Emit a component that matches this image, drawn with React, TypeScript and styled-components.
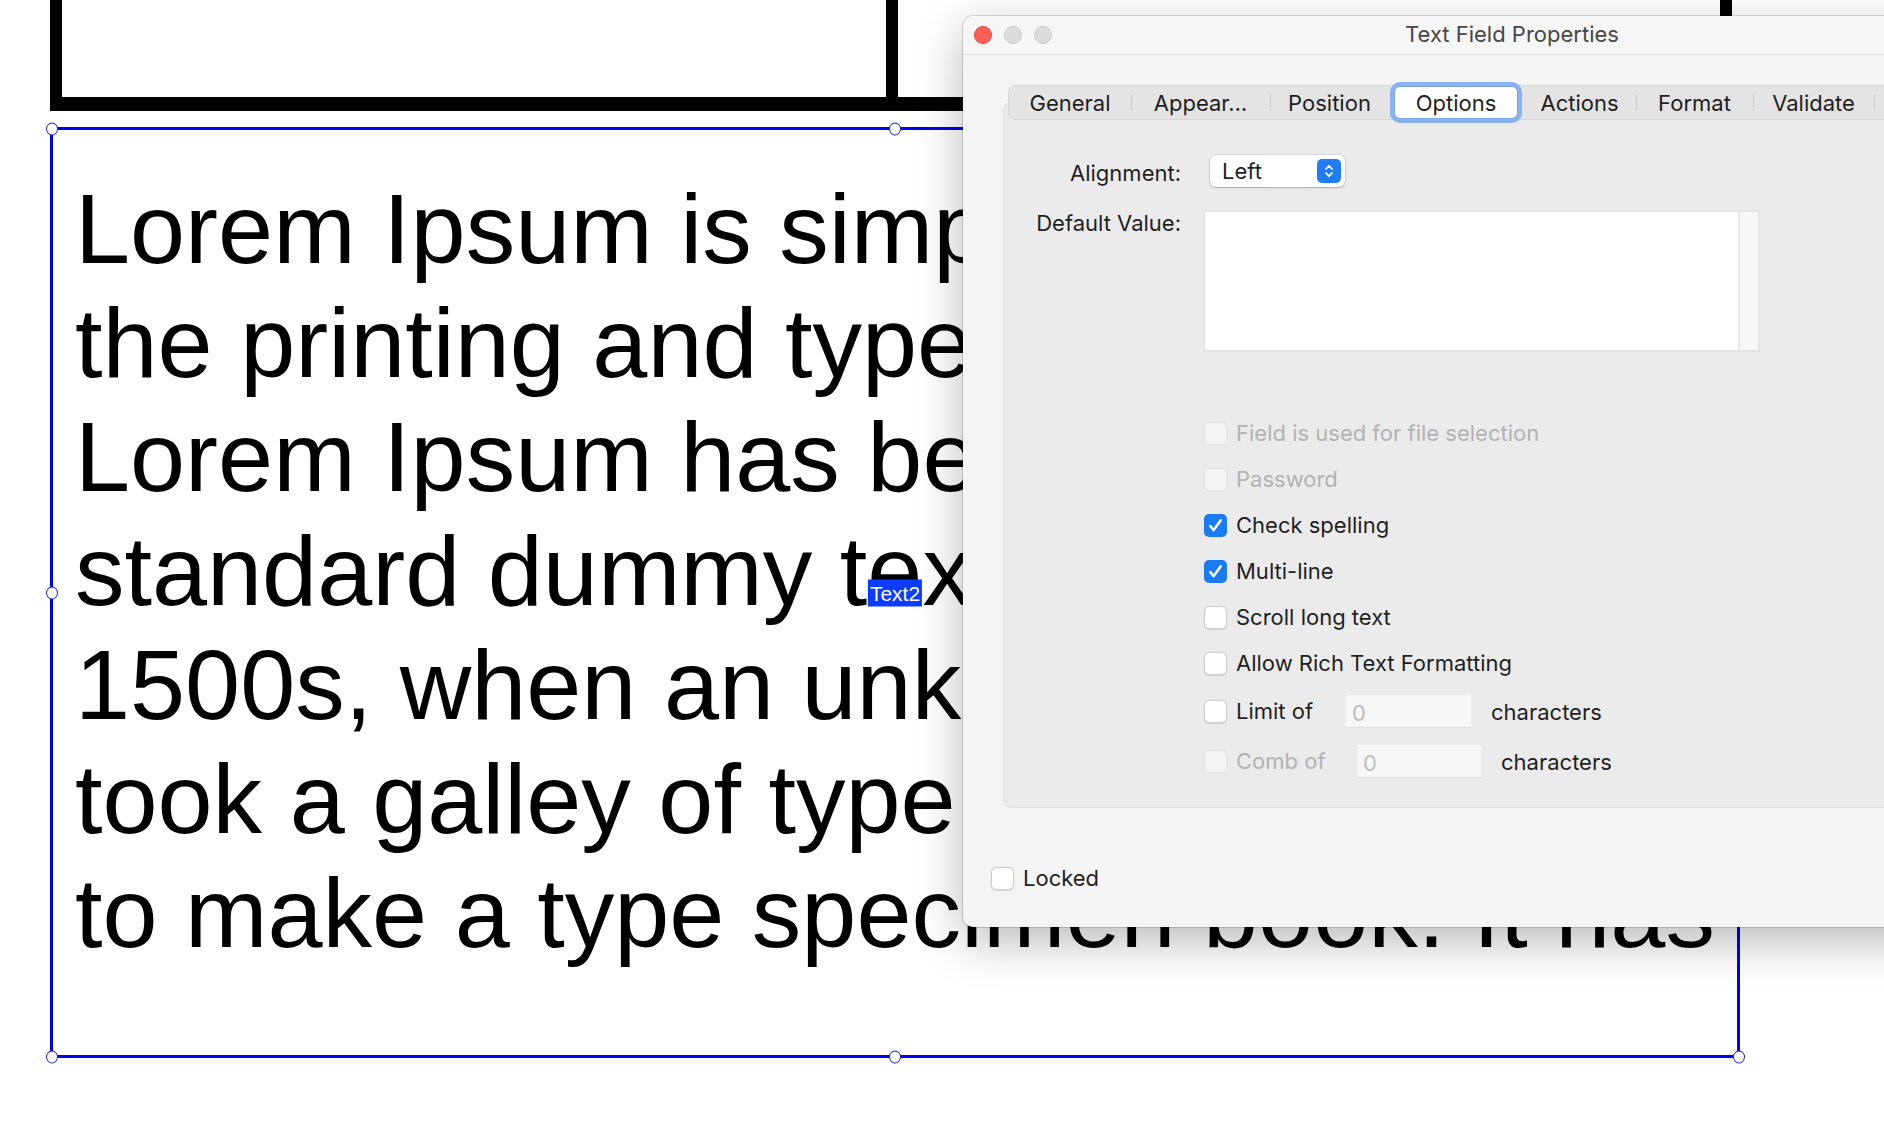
import styled, { createGlobalStyle } from 'styled-components';

const LOREM_LINES = [
	'Lorem Ipsum is simply dummy text of',
	'the printing and typesetting industry.',
	"Lorem Ipsum has been the industry's",
	'standard dummy text ever since the',
	'1500s, when an unknown printer',
	'took a galley of type and scrambled it',
	'to make a type specimen book. It has',
];

const TABS = [
	{ label: 'General', width: 122 },
	{ label: 'Appear…', width: 139 },
	{ label: 'Position', width: 119 },
	{ label: 'Options', width: 134 },
	{ label: 'Actions', width: 113 },
	{ label: 'Format', width: 117 },
	{ label: 'Validate', width: 121 },
	{ label: 'Calculate', width: 124 },
];
const ACTIVE_TAB = 3;

type Option = {
	label: string;
	checked?: boolean;
	disabled?: boolean;
	limit?: { labelWidth: number; inputWidth: number };
};

const OPTIONS: Option[] = [
	{ label: 'Field is used for file selection', disabled: true },
	{ label: 'Password', disabled: true },
	{ label: 'Check spelling', checked: true },
	{ label: 'Multi-line', checked: true },
	{ label: 'Scroll long text' },
	{ label: 'Allow Rich Text Formatting' },
	{ label: 'Limit of', limit: { labelWidth: 101, inputWidth: 125 } },
	{ label: 'Comb of', disabled: true, limit: { labelWidth: 112, inputWidth: 124 } },
];

const HANDLES: Array<[0 | 50 | 100, 0 | 50 | 100]> = [
	[0, 0],
	[50, 0],
	[100, 0],
	[0, 50],
	[100, 50],
	[0, 100],
	[50, 100],
	[100, 100],
];

function CheckMark() {
	return (
		<svg width="23" height="23" viewBox="0 0 24 24" fill="none">
			<path d="M6.5 12.5l3.6 4.3L17.5 6.5" stroke="#fff" strokeWidth="2.6" strokeLinecap="round" strokeLinejoin="round" />
		</svg>
	);
}

function Checkbox({ checked, disabled }: { checked?: boolean; disabled?: boolean }) {
	return (
		<Box $state={checked ? 'checked' : disabled ? 'disabled' : 'normal'}>
			{checked && <CheckMark />}
		</Box>
	);
}

export default function App() {
	return (
		<>
			<GlobalStyle />
			<Page>
				<FrameRow>
					<Frame $width={848} />
					<Frame $width={846} $overlap />
				</FrameRow>
				<FieldBox>
					{LOREM_LINES.map((line, index) => (
						<LoremLine key={index}>{line}</LoremLine>
					))}
					{HANDLES.map(([x, y], index) => (
						<Handle key={index} $x={x} $y={y} />
					))}
					<FieldTag>Text2</FieldTag>
				</FieldBox>

				<Dialog>
					<TitleBar>
						<Lights>
							<Light $color="red" />
							<Light />
							<Light />
						</Lights>
						<Title>Text Field Properties</Title>
					</TitleBar>
					<DialogBody>
						<TabPanel>
							<TabBar>
								{TABS.map((tab, index) => (
									<Tab
										key={tab.label}
										$width={tab.width}
										$separator={index > 0 && index !== ACTIVE_TAB && index !== ACTIVE_TAB + 1}
									>
										<TabLabel $active={index === ACTIVE_TAB}>{tab.label}</TabLabel>
									</Tab>
								))}
							</TabBar>
							<PanelBox>
								<FormGrid>
									<FieldLabel>Alignment:</FieldLabel>
									<Select>
										<span>Left</span>
										<Stepper>
											<svg width="12" height="18" viewBox="0 0 12 18" fill="none">
												<path d="M3 7l3-3.2L9 7M3 11l3 3.2L9 11" stroke="#fff" strokeWidth="1.8" strokeLinecap="round" strokeLinejoin="round" />
											</svg>
										</Stepper>
									</Select>
									<FieldLabel $top>Default Value:</FieldLabel>
									<TextArea>
										<TextAreaFill />
										<TextAreaTrack />
									</TextArea>
									<OptionList>
										{OPTIONS.map((option) => (
											<OptionRow key={option.label} $tall={!!option.limit}>
												<Checkbox checked={option.checked} disabled={option.disabled} />
												<OptionText $disabled={option.disabled} $width={option.limit?.labelWidth}>
													{option.label}
												</OptionText>
												{option.limit && (
													<>
														<NumberInput $width={option.limit.inputWidth}>0</NumberInput>
														<Suffix>characters</Suffix>
													</>
												)}
											</OptionRow>
										))}
									</OptionList>
								</FormGrid>
							</PanelBox>
						</TabPanel>
						<LockedRow>
							<Checkbox />
							<OptionText>Locked</OptionText>
						</LockedRow>
					</DialogBody>
				</Dialog>
			</Page>
		</>
	);
}

const GlobalStyle = createGlobalStyle`
	html, body {
		margin: 0;
		padding: 0;
		width: 1884px;
		height: 1128px;
		overflow: hidden;
		background: #fff;
	}

	body {
		font-family: 'Liberation Sans', Arial, sans-serif;
	}
`;

const Page = styled.div`
	position: relative;
	width: 1884px;
	height: 1128px;
	padding-left: 50px;
	box-sizing: border-box;
	overflow: hidden;
`;

const FrameRow = styled.div`
	display: flex;
`;

const Frame = styled.div<{ $width: number; $overlap?: boolean }>`
	width: ${(p) => p.$width}px;
	height: 111px;
	box-sizing: border-box;
	border: 12px solid #000;
	border-top: none;
	border-bottom-width: 14px;
	margin-left: ${(p) => (p.$overlap ? '-12px' : '0')};
`;

const FieldBox = styled.div`
	position: relative;
	margin-top: 16px;
	width: 1690px;
	height: 931px;
	box-sizing: border-box;
	border: 3px solid #0000f2;
	padding: 42px 0 0 22px;
`;

const LoremLine = styled.div`
	font-family: 'Liberation Sans', Arial, sans-serif;
	font-size: 99px;
	line-height: 114px;
	color: #000;
	white-space: nowrap;
`;

const edge = (p: 0 | 50 | 100) => (p === 0 ? '-1.5px' : p === 100 ? 'calc(100% + 1.5px)' : '50%');

const Handle = styled.span<{ $x: 0 | 50 | 100; $y: 0 | 50 | 100 }>`
	position: absolute;
	left: ${(p) => edge(p.$x)};
	top: ${(p) => edge(p.$y)};
	width: 10px;
	height: 11px;
	border-radius: 50%;
	background: #fff;
	border: 1.5px solid #2020e8;
	transform: translate(-50%, -50%);
`;

const FieldTag = styled.span`
	position: absolute;
	left: 50%;
	top: 50%;
	transform: translate(-50%, -50%);
	padding: 0 2px;
	background: #0b3cff;
	color: #fff;
	font-family: 'Liberation Sans', Arial, sans-serif;
	font-size: 21px;
	line-height: 27px;
`;

const Dialog = styled.div`
	position: absolute;
	left: 963px;
	top: 16px;
	width: 1098px;
	height: 911px;
	display: flex;
	flex-direction: column;
	background: #f4f4f4;
	border-radius: 10px;
	overflow: hidden;
	box-shadow: 0 0 0 1px rgba(0, 0, 0, 0.14), 0 14px 48px rgba(0, 0, 0, 0.28);
	font-family: Inter, 'Liberation Sans', sans-serif;
	color: #1f1f1f;
`;

const TitleBar = styled.div`
	height: 38px;
	flex-shrink: 0;
	display: grid;
	grid-template-columns: 1fr auto 1fr;
	align-items: center;
	padding-left: 11px;
	background: #f6f6f6;
	border-bottom: 1px solid #d8d8d8;
`;

const Lights = styled.div`
	display: flex;
	gap: 12px;
`;

const Light = styled.span<{ $color?: 'red' }>`
	width: 18px;
	height: 18px;
	box-sizing: border-box;
	border-radius: 50%;
	background: ${(p) => (p.$color === 'red' ? '#fe5f57' : '#dcdcdc')};
	border: 1px solid ${(p) => (p.$color === 'red' ? '#e2463f' : '#cbcbcb')};
`;

const Title = styled.div`
	font-size: 22px;
	line-height: 26px;
	padding-bottom: 2px;
	color: #474747;
	padding-right: 11px;
`;

const DialogBody = styled.div`
	flex: 1;
	padding: 30px 0 0 28px;
`;

const TabPanel = styled.div`
	margin-left: 12px;
`;

const TabBar = styled.div`
	position: relative;
	z-index: 1;
	display: flex;
	width: fit-content;
	height: 35px;
	margin-left: 5px;
	box-sizing: border-box;
	background: #e4e4e4;
	border: 1px solid #d6d6d6;
	border-radius: 7px;
`;

const Tab = styled.div<{ $width: number; $separator: boolean }>`
	position: relative;
	width: ${(p) => p.$width}px;
	display: flex;
	align-items: center;
	justify-content: center;

	&::before {
		content: '';
		display: ${(p) => (p.$separator ? 'block' : 'none')};
		position: absolute;
		left: 0;
		top: 8px;
		bottom: 8px;
		width: 1px;
		background: #cbcbcb;
	}
`;

const TabLabel = styled.span<{ $active: boolean }>`
	font-size: 22px;
	line-height: 26px;
	color: #1f1f1f;
	${(p) =>
		p.$active &&
		`
		width: calc(100% - 12px);
		height: 31px;
		display: flex;
		align-items: center;
		justify-content: center;
		background: #fff;
		border-radius: 5px;
		box-shadow: 0 0 0 1px rgba(0, 0, 0, 0.08), 0 0 0 5px #89b2f0;
	`}
`;

const PanelBox = styled.div`
	margin-top: -18px;
	height: 706px;
	box-sizing: border-box;
	padding: 52px 0 0 19px;
	background: #ebebeb;
	border: 1px solid #dfdfdf;
	border-radius: 8px;
`;

const FormGrid = styled.div`
	display: grid;
	grid-template-columns: 158px 1fr;
	column-gap: 22px;
	row-gap: 23px;
	align-items: center;
`;

const FieldLabel = styled.div<{ $top?: boolean }>`
	text-align: right;
	font-size: 22px;
	line-height: 26px;
	align-self: ${(p) => (p.$top ? 'start' : 'center')};
	padding-top: ${(p) => (p.$top ? '0' : '4px')};
`;

const Select = styled.div`
	width: 135px;
	height: 32px;
	margin-left: 7px;
	box-sizing: border-box;
	display: flex;
	align-items: center;
	justify-content: space-between;
	padding: 0 4px 0 12px;
	background: #fff;
	border-radius: 6px;
	box-shadow: 0 0 0 0.5px rgba(0, 0, 0, 0.16), 0 1px 2px rgba(0, 0, 0, 0.22);
	font-size: 22px;
`;

const Stepper = styled.span`
	width: 24px;
	height: 24px;
	display: flex;
	align-items: center;
	justify-content: center;
	background: #1f7bf6;
	border-radius: 5px;
`;

const TextArea = styled.div`
	width: 557px;
	height: 142px;
	box-sizing: border-box;
	display: flex;
	border: 2px solid #e4e4e4;
`;

const TextAreaFill = styled.div`
	flex: 1;
	background: #fff;
`;

const TextAreaTrack = styled.div`
	width: 18px;
	background: #f8f8f8;
	border-left: 2px solid #e6e6e6;
`;

const OptionList = styled.div`
	grid-column: 2;
	margin-top: 35px;
	display: flex;
	flex-direction: column;
`;

const OptionRow = styled.div<{ $tall: boolean }>`
	display: flex;
	align-items: center;
	gap: 9px;
	height: ${(p) => (p.$tall ? 50 : 46)}px;
	padding-left: 1px;
`;

const Box = styled.span<{ $state: 'checked' | 'disabled' | 'normal' }>`
	width: 23px;
	height: 23px;
	flex-shrink: 0;
	box-sizing: border-box;
	border-radius: 5px;
	display: flex;
	align-items: center;
	justify-content: center;
	background: ${(p) => (p.$state === 'checked' ? '#1b7bf5' : p.$state === 'disabled' ? '#f5f5f5' : '#fff')};
	border: ${(p) =>
		p.$state === 'checked' ? 'none' : p.$state === 'disabled' ? '1px solid #e2e2e2' : '1px solid #cdcdcd'};
	box-shadow: ${(p) => (p.$state === 'normal' ? '0 0.5px 1px rgba(0, 0, 0, 0.12)' : 'none')};
`;

const OptionText = styled.span<{ $disabled?: boolean; $width?: number }>`
	font-size: 22px;
	line-height: 26px;
	color: ${(p) => (p.$disabled ? '#b2b2b2' : '#1f1f1f')};
	white-space: nowrap;
	${(p) => (p.$width ? `width: ${p.$width}px;` : '')}
`;

const NumberInput = styled.span<{ $width: number }>`
	width: ${(p) => p.$width}px;
	height: 33px;
	box-sizing: border-box;
	padding: 5px 0 0 6px;
	background: #f7f7f7;
	border-bottom: 1px solid #e0e0e0;
	font-size: 22px;
	line-height: 26px;
	color: #bdbdbd;
`;

const Suffix = styled.span`
	margin-left: 11px;
	font-size: 22px;
	line-height: 26px;
	padding-top: 2px;
	color: #1f1f1f;
`;

const LockedRow = styled.div`
	display: flex;
	align-items: center;
	gap: 9px;
	margin-top: 57px;
`;
